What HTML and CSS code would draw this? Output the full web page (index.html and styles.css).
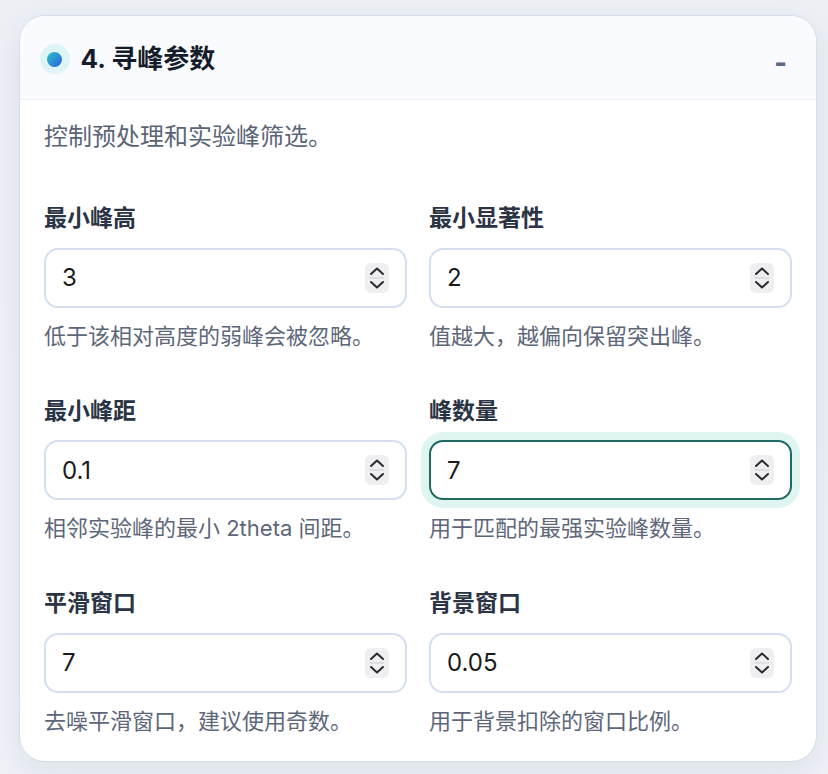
FILE: index.html
```html
<!DOCTYPE html>
<html lang="zh-CN">
<head>
<meta charset="utf-8">
<title>寻峰参数</title>
<link rel="stylesheet" href="styles.css">
</head>
<body>
<div class="page">
  <section class="card">
    <header class="card-head">
      <span class="dot-wrap"><span class="dot"></span></span>
      <h2 class="title">4. 寻峰参数</h2>
      <button class="toggle" type="button">-</button>
    </header>
    <div class="card-body">
      <p class="desc">控制预处理和实验峰筛选。</p>
      <div class="grid">
        <div class="field">
          <label class="label">最小峰高</label>
          <div class="numbox">
            <input class="num" type="text" value="3">
            <span class="spin"><svg width="24" height="30" viewBox="0 0 24 30"><path d="M6 11 L12 5.5 L18 11" fill="none" stroke="#2a2a2a" stroke-width="2" stroke-linecap="round" stroke-linejoin="round"/><path d="M4.5 15 H19.5" stroke="#d2d2d6" stroke-width="1.2"/><path d="M6 19 L12 24.5 L18 19" fill="none" stroke="#2a2a2a" stroke-width="2" stroke-linecap="round" stroke-linejoin="round"/></svg></span>
          </div>
          <p class="hint">低于该相对高度的弱峰会被忽略。</p>
        </div>
        <div class="field">
          <label class="label">最小显著性</label>
          <div class="numbox">
            <input class="num" type="text" value="2">
            <span class="spin"><svg width="24" height="30" viewBox="0 0 24 30"><path d="M6 11 L12 5.5 L18 11" fill="none" stroke="#2a2a2a" stroke-width="2" stroke-linecap="round" stroke-linejoin="round"/><path d="M4.5 15 H19.5" stroke="#d2d2d6" stroke-width="1.2"/><path d="M6 19 L12 24.5 L18 19" fill="none" stroke="#2a2a2a" stroke-width="2" stroke-linecap="round" stroke-linejoin="round"/></svg></span>
          </div>
          <p class="hint">值越大，越偏向保留突出峰。</p>
        </div>
        <div class="field">
          <label class="label">最小峰距</label>
          <div class="numbox">
            <input class="num" type="text" value="0.1">
            <span class="spin"><svg width="24" height="30" viewBox="0 0 24 30"><path d="M6 11 L12 5.5 L18 11" fill="none" stroke="#2a2a2a" stroke-width="2" stroke-linecap="round" stroke-linejoin="round"/><path d="M4.5 15 H19.5" stroke="#d2d2d6" stroke-width="1.2"/><path d="M6 19 L12 24.5 L18 19" fill="none" stroke="#2a2a2a" stroke-width="2" stroke-linecap="round" stroke-linejoin="round"/></svg></span>
          </div>
          <p class="hint">相邻实验峰的最小 2theta 间距。</p>
        </div>
        <div class="field">
          <label class="label">峰数量</label>
          <div class="numbox focus">
            <input class="num" type="text" value="7">
            <span class="spin"><svg width="24" height="30" viewBox="0 0 24 30"><path d="M6 11 L12 5.5 L18 11" fill="none" stroke="#2a2a2a" stroke-width="2" stroke-linecap="round" stroke-linejoin="round"/><path d="M4.5 15 H19.5" stroke="#d2d2d6" stroke-width="1.2"/><path d="M6 19 L12 24.5 L18 19" fill="none" stroke="#2a2a2a" stroke-width="2" stroke-linecap="round" stroke-linejoin="round"/></svg></span>
          </div>
          <p class="hint">用于匹配的最强实验峰数量。</p>
        </div>
        <div class="field">
          <label class="label">平滑窗口</label>
          <div class="numbox">
            <input class="num" type="text" value="7">
            <span class="spin"><svg width="24" height="30" viewBox="0 0 24 30"><path d="M6 11 L12 5.5 L18 11" fill="none" stroke="#2a2a2a" stroke-width="2" stroke-linecap="round" stroke-linejoin="round"/><path d="M4.5 15 H19.5" stroke="#d2d2d6" stroke-width="1.2"/><path d="M6 19 L12 24.5 L18 19" fill="none" stroke="#2a2a2a" stroke-width="2" stroke-linecap="round" stroke-linejoin="round"/></svg></span>
          </div>
          <p class="hint">去噪平滑窗口，建议使用奇数。</p>
        </div>
        <div class="field">
          <label class="label">背景窗口</label>
          <div class="numbox">
            <input class="num" type="text" value="0.05">
            <span class="spin"><svg width="24" height="30" viewBox="0 0 24 30"><path d="M6 11 L12 5.5 L18 11" fill="none" stroke="#2a2a2a" stroke-width="2" stroke-linecap="round" stroke-linejoin="round"/><path d="M4.5 15 H19.5" stroke="#d2d2d6" stroke-width="1.2"/><path d="M6 19 L12 24.5 L18 19" fill="none" stroke="#2a2a2a" stroke-width="2" stroke-linecap="round" stroke-linejoin="round"/></svg></span>
          </div>
          <p class="hint">用于背景扣除的窗口比例。</p>
        </div>
      </div>
    </div>
  </section>
</div>
</body>
</html>
```
FILE: styles.css
```css
html, body {
  margin: 0;
  padding: 0;
}
body {
  background: linear-gradient(180deg, #eceff4 0%, #eef1f6 100%);
  font-family: Inter, "Noto Sans CJK SC", sans-serif;
  min-height: 774px;
}
.page {
  padding: 15px 11px 14px 19px;
}
.card {
  border: 1.5px solid #d4deee;
  border-radius: 26px;
  background: #ffffff;
  box-shadow: 0 10px 28px rgba(40, 60, 100, 0.08);
  overflow: hidden;
}
.card-head {
  height: 84px;
  box-sizing: border-box;
  display: flex;
  align-items: center;
  padding: 3px 29px 0 19.5px;
  background: #fafbfe;
  border-bottom: 1px solid #edf0f4;
}
.dot-wrap {
  width: 30px;
  height: 30px;
  border-radius: 50%;
  background: #dff4f7;
  display: flex;
  align-items: center;
  justify-content: center;
  flex: none;
}
.dot {
  width: 15px;
  height: 15px;
  border-radius: 50%;
  background: linear-gradient(135deg, #27c3c6 0%, #2f5fe0 100%);
}
.title {
  margin: 0 0 0 11px;
  font-size: 26px;
  font-weight: 700;
  color: #151c2b;
  line-height: 34px;
}
.toggle {
  margin-left: auto;
  border: 0;
  background: transparent;
  padding: 8px 0 0 0;
  font-family: Inter, "Noto Sans CJK SC", sans-serif;
  font-size: 27px;
  font-weight: 800;
  color: #5b6a82;
  line-height: 30px;
}
.card-body {
  padding: 20px 24px 25px 24px;
}
.desc {
  margin: 0;
  font-size: 24px;
  line-height: 34px;
  color: #5a6477;
}
.grid {
  display: grid;
  grid-template-columns: minmax(0, 1fr) minmax(0, 1fr);
  column-gap: 22px;
  row-gap: 45px;
  margin-top: 49px;
}
.field {
  display: flex;
  flex-direction: column;
  min-width: 0;
}
.label {
  font-size: 23px;
  font-weight: 700;
  line-height: 30px;
  color: #2b3444;
}
.numbox {
  margin-top: 14.5px;
  height: 60px;
  box-sizing: border-box;
  border: 2px solid #d5dff0;
  border-radius: 14px;
  display: flex;
  align-items: center;
  padding: 0 16px;
  background: #ffffff;
}
.numbox.focus {
  border: 2px solid #1f6b62;
  padding: 0 16px;
  box-shadow: 0 0 0 8px #dff5f2;
}
.num {
  flex: 1;
  width: 100%;
  min-width: 0;
  border: 0;
  outline: 0;
  padding: 0;
  background: transparent;
  font-family: Inter, "Noto Sans CJK SC", sans-serif;
  font-size: 24px;
  color: #1b1b1b;
}
.spin {
  width: 24px;
  height: 30px;
  border-radius: 6px;
  background: #efeff2;
  display: flex;
  flex: none;
}
.hint {
  margin: 13px 0 0 0;
  font-size: 22px;
  line-height: 30px;
  color: #5d6779;
}
```
